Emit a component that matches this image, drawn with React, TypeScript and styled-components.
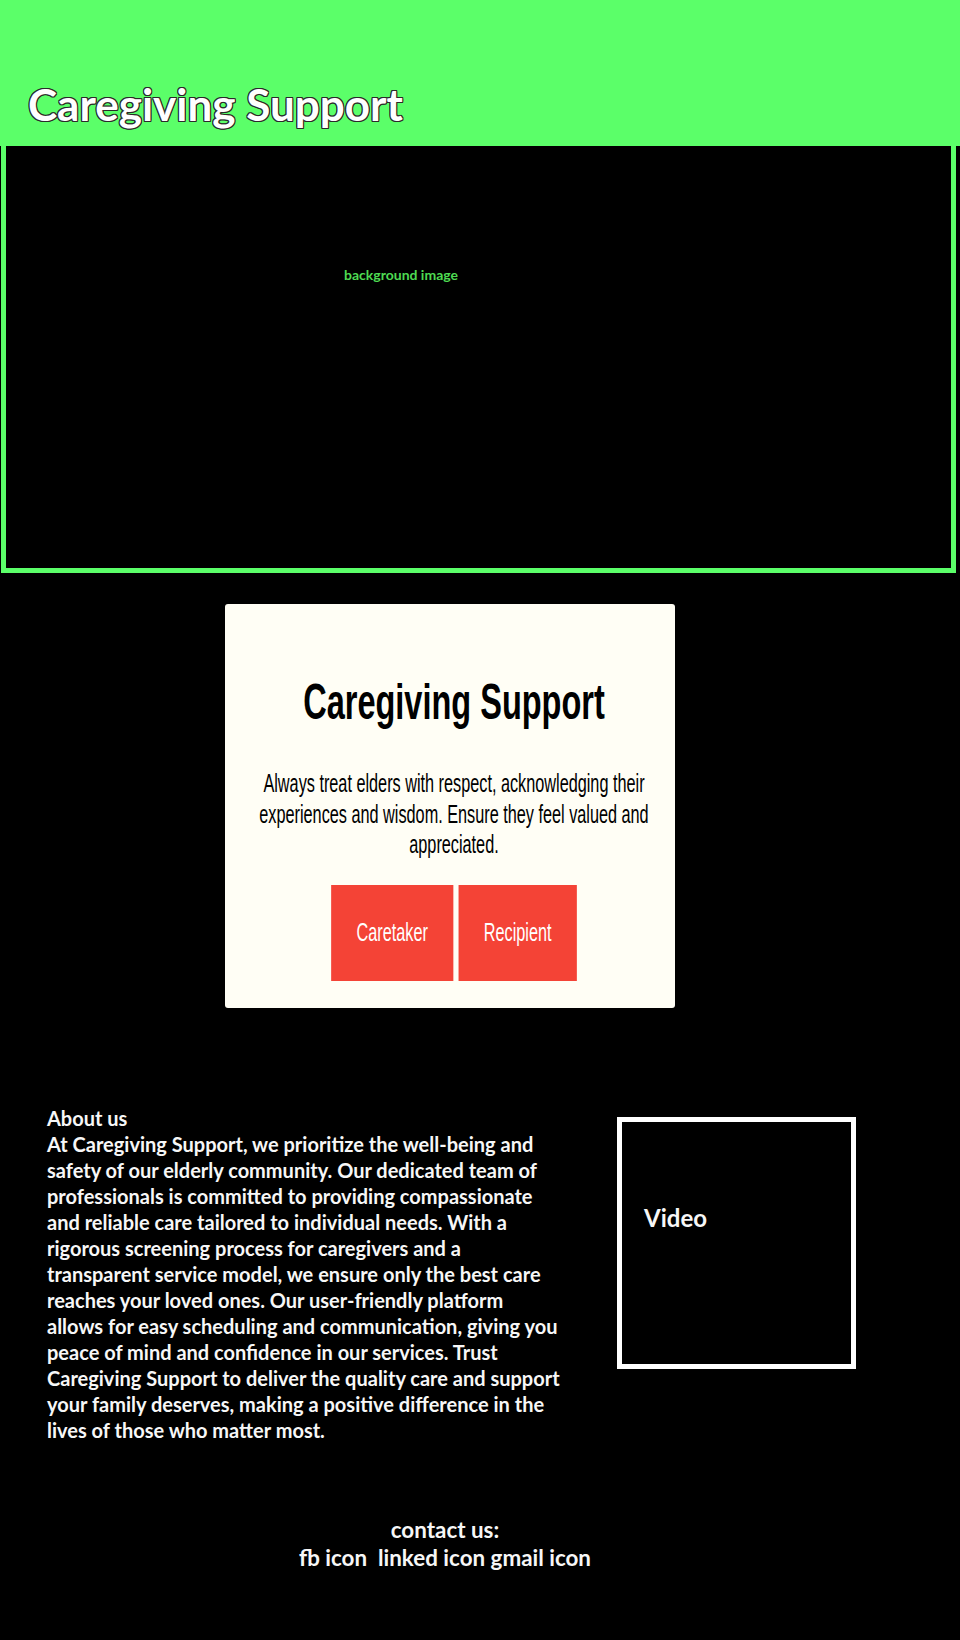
import React from "react";
import styled, { createGlobalStyle } from "styled-components";

const GlobalStyle = createGlobalStyle`
  html, body {
    margin: 0;
    padding: 0;
    background: #000;
  }
  body {
    width: 960px;
    min-height: 1640px;
    font-family: Lato, "Noto Sans", sans-serif;
  }
`;

const Header = styled.header`
  height: 146px;
  box-sizing: border-box;
  background: #5bff69;
  padding: 82px 0 0 28px;
`;

const HeaderTitle = styled.h1`
  margin: 0;
  font: 700 44px/44px Lato, "Noto Sans", sans-serif;
  color: #fff;
  text-shadow: -1px -1px 0 #2a2a2a, 1px -1px 0 #2a2a2a, -1px 1px 0 #2a2a2a,
    1px 1px 0 #2a2a2a, 0 -1px 0 #2a2a2a, 0 1px 0 #2a2a2a, -1px 0 0 #2a2a2a,
    1px 0 0 #2a2a2a;
`;

const Hero = styled.section`
  margin-left: 1px;
  width: 955px;
  height: 427px;
  box-sizing: border-box;
  border: 5px solid #5bff69;
  border-top: 0;
  padding: 120px 0 0 338px;
  background: #000;
`;

const HeroLabel = styled.span`
  display: block;
  font: 700 14px/17px Lato, "Noto Sans", sans-serif;
  color: #4edb52;
`;

const Card = styled.div`
  margin: 31px 0 0 225px;
  width: 450px;
  height: 404px;
  box-sizing: border-box;
  padding-top: 73px;
  background: #fffef5;
  border-radius: 3px;
  overflow: hidden;
`;

const Squash = styled.div`
  width: 692px;
  margin-left: -117px;
  transform: scaleX(0.65);
  display: flex;
  flex-direction: column;
  align-items: center;
`;

const CardTitle = styled.h2`
  margin: 0;
  font: 700 50px/50px "Liberation Sans", Arial, sans-serif;
  color: #000;
  white-space: nowrap;
`;

const CardText = styled.p`
  margin: 41px 0 0;
  width: 640px;
  font: 400 25px/30.5px "Liberation Sans", Arial, sans-serif;
  color: #000;
  text-align: center;
`;

const ButtonRow = styled.div`
  display: flex;
  gap: 8px;
  margin-top: 25px;
`;

const ActionButton = styled.button`
  height: 96px;
  padding: 0 39px;
  border: 0;
  background: #f44336;
  color: #fff;
  font: 400 25px "Liberation Sans", Arial, sans-serif;
  cursor: pointer;
`;

const About = styled.section`
  display: flex;
  align-items: flex-start;
  margin-top: 97px;
  padding-left: 47px;
`;

const AboutText = styled.p`
  margin: 0;
  width: 540px;
  font: 700 20px/26px Lato, "Noto Sans", sans-serif;
  color: #f7f7f7;
  white-space: nowrap;
`;

const VideoBox = styled.div`
  margin: 12px 0 0 30px;
  width: 239px;
  height: 252px;
  box-sizing: border-box;
  border: 5px solid #fff;
  padding: 82px 0 0 22px;
`;

const VideoLabel = styled.span`
  display: block;
  font: 700 24px/28px Lato, "Noto Sans", sans-serif;
  color: #f7f7f7;
`;

const Contact = styled.footer`
  margin-top: 73px;
  width: 890px;
  text-align: center;
  font: 700 22.4px/28px Lato, "Noto Sans", sans-serif;
  color: #f7f7f7;
  white-space: pre;
`;

const aboutLines = [
  "About us",
  "At Caregiving Support, we prioritize the well-being and",
  "safety of our elderly community. Our dedicated team of",
  "professionals is committed to providing compassionate",
  "and reliable care tailored to individual needs. With a",
  "rigorous screening process for caregivers and a",
  "transparent service model, we ensure only the best care",
  "reaches your loved ones. Our user-friendly platform",
  "allows for easy scheduling and communication, giving you",
  "peace of mind and confidence in our services. Trust",
  "Caregiving Support to deliver the quality care and support",
  "your family deserves, making a positive difference in the",
  "lives of those who matter most.",
];

export default function App() {
  return (
    <>
      <GlobalStyle />
      <Header>
        <HeaderTitle>Caregiving Support</HeaderTitle>
      </Header>
      <Hero>
        <HeroLabel>background image</HeroLabel>
      </Hero>
      <Card>
        <Squash>
          <CardTitle>Caregiving Support</CardTitle>
          <CardText>
            Always treat elders with respect, acknowledging their experiences
            and wisdom. Ensure they feel valued and appreciated.
          </CardText>
          <ButtonRow>
            <ActionButton>Caretaker</ActionButton>
            <ActionButton>Recipient</ActionButton>
          </ButtonRow>
        </Squash>
      </Card>
      <About>
        <AboutText>
          {aboutLines.map((line, i) => (
            <React.Fragment key={i}>
              {line}
              {i < aboutLines.length - 1 && <br />}
            </React.Fragment>
          ))}
        </AboutText>
        <VideoBox>
          <VideoLabel>Video</VideoLabel>
        </VideoBox>
      </About>
      <Contact>
        {"contact us:\nfb icon  linked icon gmail icon"}
      </Contact>
    </>
  );
}
